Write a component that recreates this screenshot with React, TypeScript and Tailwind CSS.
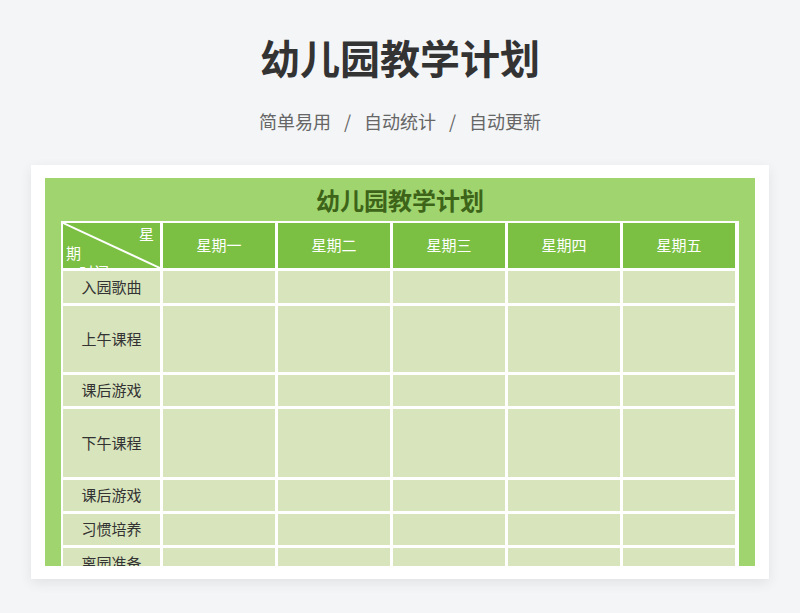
export default function App() {
  const days = ["星期一", "星期二", "星期三", "星期四", "星期五"];
  const rows: [string, number][] = [
    ["入园歌曲", 32], ["上午课程", 66], ["课后游戏", 31], ["下午课程", 68],
    ["课后游戏", 31], ["习惯培养", 31], ["离园准备", 31],
  ];
  return (
    <div className="w-[800px] h-[613px] bg-[#f3f5f7] overflow-hidden flex flex-col items-center" style={{ fontFamily: '"Noto Sans CJK SC", "Noto Sans", sans-serif' }}>
      <div className="mt-[29px] text-[40px] leading-[56px] font-bold text-[#333]">幼儿园教学计划</div>
      <div className="mt-[23px] text-[18px] leading-[26px] text-[#666] flex gap-[13px]">
        <span>简单易用</span><span>/</span><span>自动统计</span><span>/</span><span>自动更新</span>
      </div>
      <div className="mt-[31px] w-[738px] h-[414px] bg-white shadow-[0_4px_12px_rgba(0,0,0,0.08)] pt-[13px] px-[14px]">
        <div className="h-[388px] bg-[#9fd46f] overflow-hidden px-[16px]">
          <div className="h-[43px] flex items-center justify-center text-[24px] font-bold text-[#3d6418]">幼儿园教学计划</div>
          <div className="bg-white p-[2px] grid gap-[3px] grid-cols-[97px_112px_112px_112px_112px_112px]">
            <div className="relative h-[45px] bg-[#7cc043] text-white text-[15px] leading-[18px] overflow-hidden">
              <svg className="absolute inset-0" width="97" height="45"><line x1="0" y1="0" x2="97" y2="45" stroke="white" strokeWidth="2" /></svg>
              <span className="absolute right-[6px] top-[2px]">星</span>
              <span className="absolute left-[3px] top-[21px]">期</span>
              <span className="absolute left-[16px] top-[40px]">时间</span>
            </div>
            {days.map((d) => (
              <div key={d} className="h-[45px] bg-[#7cc043] text-white text-[15px] flex items-center justify-center">{d}</div>
            ))}
            {rows.map(([r, h], i) => (
              <>
                <div key={"r" + i} style={{ height: h }} className="bg-[#d8e4bc] text-[#333] text-[15px] flex items-center justify-center">{r}</div>
                {days.map((d) => <div key={d + i} style={{ height: h }} className="bg-[#d8e4bc]" />)}
              </>
            ))}
          </div>
        </div>
      </div>
    </div>
  );
}
